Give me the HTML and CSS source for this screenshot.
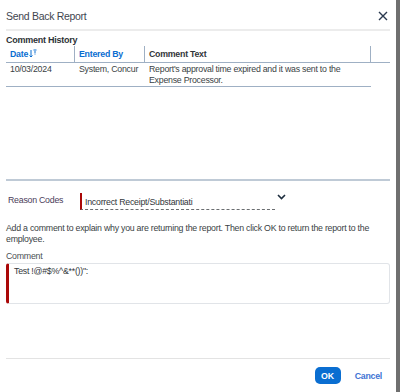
FILE: index.html
```html
<!DOCTYPE html>
<html lang="en">
<head>
    <meta charset="UTF-8">
    <title>Send Back Report</title>
    <link rel="stylesheet" href="styles.css">
</head>
<body>
    <div class="dialog">
        <div class="header">
            <span class="title">Send Back Report</span>
            <svg class="close" width="10" height="10" viewBox="0 0 10 10">
                <path d="M1 1L9 9M9 1L1 9" stroke="#2b3a4f" stroke-width="1.4" fill="none"/>
            </svg>
        </div>

        <div class="history">
            <div class="section-title">Comment History</div>
            <div class="table">
                <div class="row head">
                    <div class="cell c1 link">Date<svg class="sort" width="8" height="9" viewBox="0 0 8 9"><path d="M2 1V8M0.5 6.5L2 8L3.5 6.5M4.5 1H7.5M5 3H7M5.5 5H6.5" stroke="#0a6ed1" stroke-width="1" fill="none"/></svg></div>
                    <div class="cell c2 link">Entered By</div>
                    <div class="cell c3">Comment Text</div>
                    <div class="cell c4"></div>
                </div>
                <div class="row data">
                    <div class="cell c1">10/03/2024</div>
                    <div class="cell c2">System, Concur</div>
                    <div class="cell c3">Report's approval time expired and it was sent to the Expense Processor.</div>
                </div>
            </div>
        </div>

        <div class="form">
            <div class="reason">
                <label class="reason-label">Reason Codes</label>
                <div class="select">
                    <span class="select-text">Incorrect Receipt/Substantiati</span>
                </div>
                <svg class="chevron" width="9" height="6" viewBox="0 0 9 6">
                    <path d="M1 1L4.5 4.5L8 1" stroke="#1d2d3e" stroke-width="1.6" fill="none"/>
                </svg>
            </div>

            <p class="hint">Add a comment to explain why you are returning the report. Then click OK to return the report to the employee.</p>

            <div class="comment-label">Comment</div>
            <div class="textarea">Test !@#$%^&amp;**())":</div>
        </div>

        <div class="footer">
            <button class="ok">OK</button>
            <a class="cancel">Cancel</a>
        </div>
    </div>
</body>
</html>
```

FILE: styles.css
```css
body {
    margin: 0;
    background: #6f6f6f;
    font-family: "Liberation Sans", Arial, sans-serif;
    color: #32363a;
    letter-spacing: -0.25px;
}

.dialog {
    width: 396px;
    height: 392px;
    background: #fff;
    display: flex;
    flex-direction: column;
}

.header {
    margin: 0 6px;
    height: 29px;
    display: flex;
    align-items: center;
    justify-content: space-between;
    border-bottom: 2px solid #ececec;
}

.title {
    font-size: 10.5px;
    letter-spacing: -0.3px;
    color: #3f4650;
    padding-top: 2px;
}

.close {
    margin-right: 2px;
    margin-top: 2px;
}

.history {
    margin: 0 6px;
    height: 148px;
    border-bottom: 2px solid #bfcad6;
}

.section-title {
    font-size: 9px;
    font-weight: bold;
    margin-top: 3px;
    height: 12px;
    line-height: 12px;
    color: #2d3236;
}

.row {
    display: flex;
}

.row.head {
    height: 16px;
    border-bottom: 1px solid #9fb0c4;
    font-size: 8.8px;
    font-weight: bold;
    line-height: 16px;
}

.row.data {
    width: 365px;
    border-bottom: 1px solid #9fb0c4;
    font-size: 8.8px;
    line-height: 11px;
    padding: 1px 0 0;
    color: #3a3f44;
}

.cell {
    padding-left: 4px;
    box-sizing: border-box;
}

.c1 { width: 69px; }
.c2 { width: 70px; }
.c3 { width: 226px; }
.c4 { flex: 1; }

.data .c3 {
    padding-right: 16px;
}

.head .c1,
.head .c2,
.head .c3 {
    border-right: 1px solid #9fb0c4;
}

.link {
    color: #0a6ed1;
}

.sort {
    margin-left: 1px;
    vertical-align: -1px;
}

.form {
    padding: 0 6px;
    flex: 1;
}

.reason {
    display: flex;
    align-items: center;
    margin-top: 11px;
    height: 18px;
}

.reason-label {
    width: 74px;
    padding-left: 2px;
    box-sizing: border-box;
    font-size: 8.8px;
    color: #4b3d5a;
    margin-top: -2px;
}

.select {
    width: 190px;
    height: 16px;
    border-left: 2px solid #aa0808;
    border-bottom: 1px dashed #6a6d70;
    padding-left: 3px;
    font-size: 8.8px;
    line-height: 18px;
    color: #32363a;
}

.chevron {
    margin-left: 2px;
    margin-top: -8px;
}

.hint {
    font-size: 8.8px;
    line-height: 11px;
    margin: 13px 0 0;
    color: #3a3f44;
}

.comment-label {
    font-size: 8.8px;
    margin-top: 6px;
    line-height: 11px;
    color: #4b4f54;
}

.textarea {
    margin-top: 1px;
    height: 35px;
    border: 1px solid #e1e4e8;
    border-left: 3px solid #aa0808;
    border-radius: 3px;
    padding: 2px 5px;
    font-size: 8.8px;
    line-height: 11px;
    color: #32363a;
}

.footer {
    margin: 0 6px;
    height: 33px;
    border-top: 1px solid #e3e3e3;
    display: flex;
    align-items: center;
    justify-content: flex-end;
    padding-right: 8px;
    gap: 14px;
}

.ok {
    border: none;
    border-radius: 5px;
    background: #0a6ed1;
    color: #fff;
    font-family: "Liberation Sans", Arial, sans-serif;
    font-size: 8.8px;
    font-weight: bold;
    width: 26px;
    height: 17px;
    padding: 0;
}

.cancel {
    color: #3f74d4;
    font-size: 8.8px;
    font-weight: bold;
}
```
